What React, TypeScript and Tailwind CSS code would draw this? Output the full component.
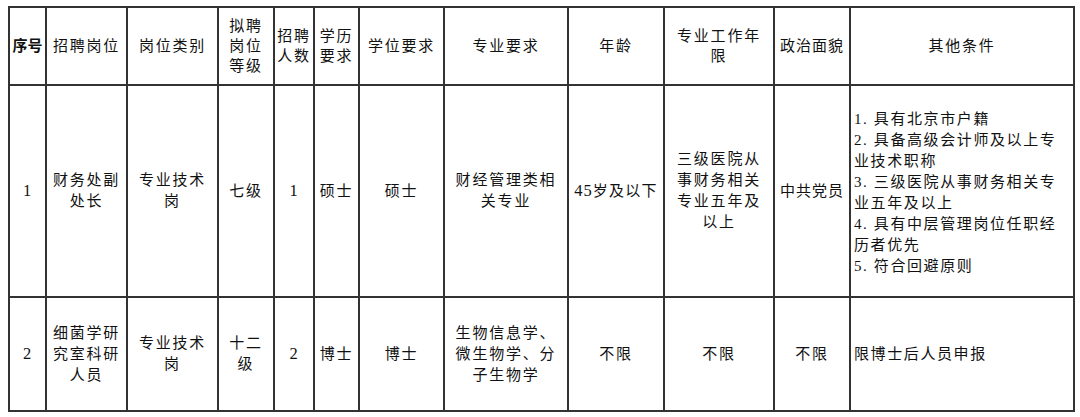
import React from "react";

const font = {
  fontFamily: '"Liberation Serif", "Noto Sans CJK SC", serif',
};

function L({ lines }: { lines: string[] }) {
  return (
    <>
      {lines.map((l, i) => (
        <div key={i} className="whitespace-nowrap">
          {l}
        </div>
      ))}
    </>
  );
}

function N({ children }: { children: React.ReactNode }) {
  return <span className="text-[16.5px] tracking-[1px]">{children}</span>;
}

const th =
  "border-2 border-[#333] text-center align-middle font-normal p-0 leading-[20px]";
const td = "border-2 border-[#333] text-center align-middle p-0 leading-[21px]";

export default function App() {
  return (
    <div className="w-[1080px] h-[417px] bg-white pt-[6px] pl-[8px]" style={font}>
      <table className="table-fixed border-collapse w-[1065px] text-[15px] tracking-[1.8px] text-[#111]">
        <colgroup>
          <col className="w-[37px]" />
          <col className="w-[81px]" />
          <col className="w-[91px]" />
          <col className="w-[56px]" />
          <col className="w-[40px]" />
          <col className="w-[45px]" />
          <col className="w-[85px]" />
          <col className="w-[124px]" />
          <col className="w-[96px]" />
          <col className="w-[110px]" />
          <col className="w-[76px]" />
          <col className="w-[224px]" />
        </colgroup>
        <tbody>
          <tr className="h-[78px]">
            <th className={th + " !font-bold tracking-normal"}>序号</th>
            <th className={th}>招聘岗位</th>
            <th className={th}>岗位类别</th>
            <th className={th}>
              <L lines={["拟聘", "岗位", "等级"]} />
            </th>
            <th className={th}>
              <L lines={["招聘", "人数"]} />
            </th>
            <th className={th}>
              <L lines={["学历", "要求"]} />
            </th>
            <th className={th}>学位要求</th>
            <th className={th}>专业要求</th>
            <th className={th}>年龄</th>
            <th className={th}>
              <L lines={["专业工作年", "限"]} />
            </th>
            <th className={th + " tracking-[1px]"}>政治面貌</th>
            <th className={th}>其他条件</th>
          </tr>
          <tr className="h-[212px]">
            <td className={td}><N>1</N></td>
            <td className={td}>
              <L lines={["财务处副", "处长"]} />
            </td>
            <td className={td}>
              <L lines={["专业技术", "岗"]} />
            </td>
            <td className={td}>七级</td>
            <td className={td}><N>1</N></td>
            <td className={td}>硕士</td>
            <td className={td}>硕士</td>
            <td className={td}>
              <L lines={["财经管理类相", "关专业"]} />
            </td>
            <td className={td + " tracking-[1.2px]"}><N>45</N>岁及以下</td>
            <td className={td}>
              <L lines={["三级医院从", "事财务相关", "专业五年及", "以上"]} />
            </td>
            <td className={td + " tracking-[1px]"}>中共党员</td>
            <td className={td + " !text-left pl-[3px] leading-[20.7px] tracking-[1.6px] pt-[3px]"}>
              <L
                lines={[
                  "1. 具有北京市户籍",
                  "2. 具备高级会计师及以上专",
                  "业技术职称",
                  "3. 三级医院从事财务相关专",
                  "业五年及以上",
                  "4. 具有中层管理岗位任职经",
                  "历者优先",
                  "5. 符合回避原则",
                ]}
              />
            </td>
          </tr>
          <tr className="h-[114px]">
            <td className={td}><N>2</N></td>
            <td className={td}>
              <L lines={["细菌学研", "究室科研", "人员"]} />
            </td>
            <td className={td}>
              <L lines={["专业技术", "岗"]} />
            </td>
            <td className={td}>
              <L lines={["十二", "级"]} />
            </td>
            <td className={td}><N>2</N></td>
            <td className={td}>博士</td>
            <td className={td}>博士</td>
            <td className={td}>
              <L lines={["生物信息学、", "微生物学、分", "子生物学"]} />
            </td>
            <td className={td}>不限</td>
            <td className={td}>不限</td>
            <td className={td}>不限</td>
            <td className={td + " !text-left pl-[3px] tracking-[1.6px]"}>
              限博士后人员申报
            </td>
          </tr>
        </tbody>
      </table>
    </div>
  );
}
